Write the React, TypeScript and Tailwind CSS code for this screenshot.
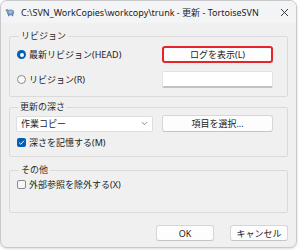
import React from "react"

const font = { fontFamily: '"Noto Sans", "Noto Sans CJK JP", sans-serif' }

function Radio({ checked }: { checked?: boolean }) {
  if (checked) {
    return (
      <span className="flex h-[9px] w-[9px] items-center justify-center rounded-full bg-[#005fb8]">
        <span className="h-[4px] w-[4px] rounded-full bg-white" />
      </span>
    )
  }
  return <span className="h-[9px] w-[9px] rounded-full border border-[#8a8a8a] bg-[#f7f7f7]" />
}

function Check({ checked }: { checked?: boolean }) {
  if (checked) {
    return (
      <span className="flex h-[9px] w-[9px] items-center justify-center rounded-[2px] bg-[#005fb8]">
        <svg width="7" height="7" viewBox="0 0 8 8">
          <path d="M1.3 4.2 L3.2 6 L6.8 2" fill="none" stroke="#fff" strokeWidth="1.1" />
        </svg>
      </span>
    )
  }
  return <span className="h-[9px] w-[9px] rounded-[2px] border border-[#8a8a8a] bg-[#f7f7f7]" />
}

function Btn({ children, red, className = "" }: { children: React.ReactNode; red?: boolean; className?: string }) {
  return (
    <div
      className={`flex items-center justify-center rounded-[3px] bg-[#fdfdfd] text-[9px] leading-none text-[#1b1b1b] ${
        red ? "border-2 border-[#e5252a]" : "border border-[#d6d6d6] border-b-[#c4c4c4]"
      } ${className}`}
    >
      {children}
    </div>
  )
}

function Group({ label, children, className = "" }: { label: string; children: React.ReactNode; className?: string }) {
  return (
    <fieldset className={`rounded-[2px] border border-[#dadada] ${className}`}>
      <legend className="ml-[2px] px-[2px] text-[9px] leading-[12px] text-[#2b2b2b]">{label}</legend>
      {children}
    </fieldset>
  )
}

export default function App() {
  return (
    <div className="h-[250px] w-[300px] bg-white" style={font}>
      <div className="flex h-[248px] w-[297px] flex-col overflow-hidden rounded-[7px] border border-[#c9c9c9] bg-[#f0f0f0] shadow-[0_1px_3px_rgba(0,0,0,0.15)]">
        {/* title bar */}
        <div className="flex h-[22px] shrink-0 items-center bg-[#f3f4f6] pl-[4px] pr-[6px]">
          <svg width="10" height="10" viewBox="0 0 10 10" className="mr-[6px]">
            <ellipse cx="5.5" cy="5.5" rx="3.6" ry="3" fill="#6f8fb3" />
            <ellipse cx="5.5" cy="5" rx="2.2" ry="1.7" fill="#9fb8d4" />
            <circle cx="2" cy="3.4" r="1.3" fill="#7c95b0" />
            <rect x="3" y="7.6" width="1.2" height="1.6" fill="#5f7a99" />
            <rect x="7" y="7.6" width="1.2" height="1.6" fill="#5f7a99" />
          </svg>
          <span className="flex-1 text-[9px] leading-none text-[#1b1b1b]">
            C:\SVN_WorkCopies\workcopy\trunk - 更新 - TortoiseSVN
          </span>
          <svg width="9" height="9" viewBox="0 0 9 9" className="mr-[1px]">
            <path d="M1 1 L8 8 M8 1 L1 8" stroke="#3a3a3a" strokeWidth="1" />
          </svg>
        </div>

        {/* body */}
        <div className="flex flex-1 flex-col px-[8px] pt-[7px]">
          <Group label="リビジョン" className="pb-[8px] pl-[7px] pr-[14px]">
            <div className="grid grid-cols-[1fr_111px] gap-y-[8px] pt-[4px]">
              <div className="flex items-center gap-[3px] text-[9px] leading-none text-[#1b1b1b]">
                <Radio checked />
                <span>最新リビジョン(HEAD)</span>
              </div>
              <Btn red className="h-[17px]">ログを表示(L)</Btn>
              <div className="flex items-center gap-[3px] text-[9px] leading-none text-[#1b1b1b]">
                <Radio />
                <span>リビジョン(R)</span>
              </div>
              <div className="h-[17px] rounded-[2px] border border-[#e2e2e2] border-b-2 border-b-[#c2c2c2] bg-white" />
            </div>
          </Group>

          <Group label="更新の深さ" className="mt-[4px] pb-[9px] pl-[6px] pr-[14px]">
            <div className="grid grid-cols-[137px_1fr_111px] items-center pt-[2px]">
              <div className="flex h-[16px] items-center justify-between rounded-[2px] border border-[#dedede] bg-white pl-[4px] pr-[4px] text-[9px] leading-none text-[#1b1b1b]">
                <span>作業コピー</span>
                <svg width="7" height="5" viewBox="0 0 7 5">
                  <path d="M1 1.2 L3.5 3.7 L6 1.2" fill="none" stroke="#7a7a7a" strokeWidth="0.9" />
                </svg>
              </div>
              <div />
              <Btn className="h-[17px]">項目を選択...</Btn>
            </div>
            <div className="mt-[6px] flex items-center gap-[3px] pl-[1px] text-[9px] leading-none text-[#1b1b1b]">
              <Check checked />
              <span>深さを記憶する(M)</span>
            </div>
          </Group>

          <Group label="その他" className="mt-[7px] h-[49px] pl-[7px] pr-[14px]">
            <div className="mt-[4px] flex items-center gap-[3px] text-[9px] leading-none text-[#1b1b1b]">
              <Check />
              <span>外部参照を除外する(X)</span>
            </div>
          </Group>

          <div className="mt-[12px] flex justify-end gap-[16px]">
            <Btn className="h-[16px] w-[58px]">OK</Btn>
            <Btn className="h-[16px] w-[58px]">キャンセル</Btn>
          </div>
        </div>
      </div>
    </div>
  )
}
